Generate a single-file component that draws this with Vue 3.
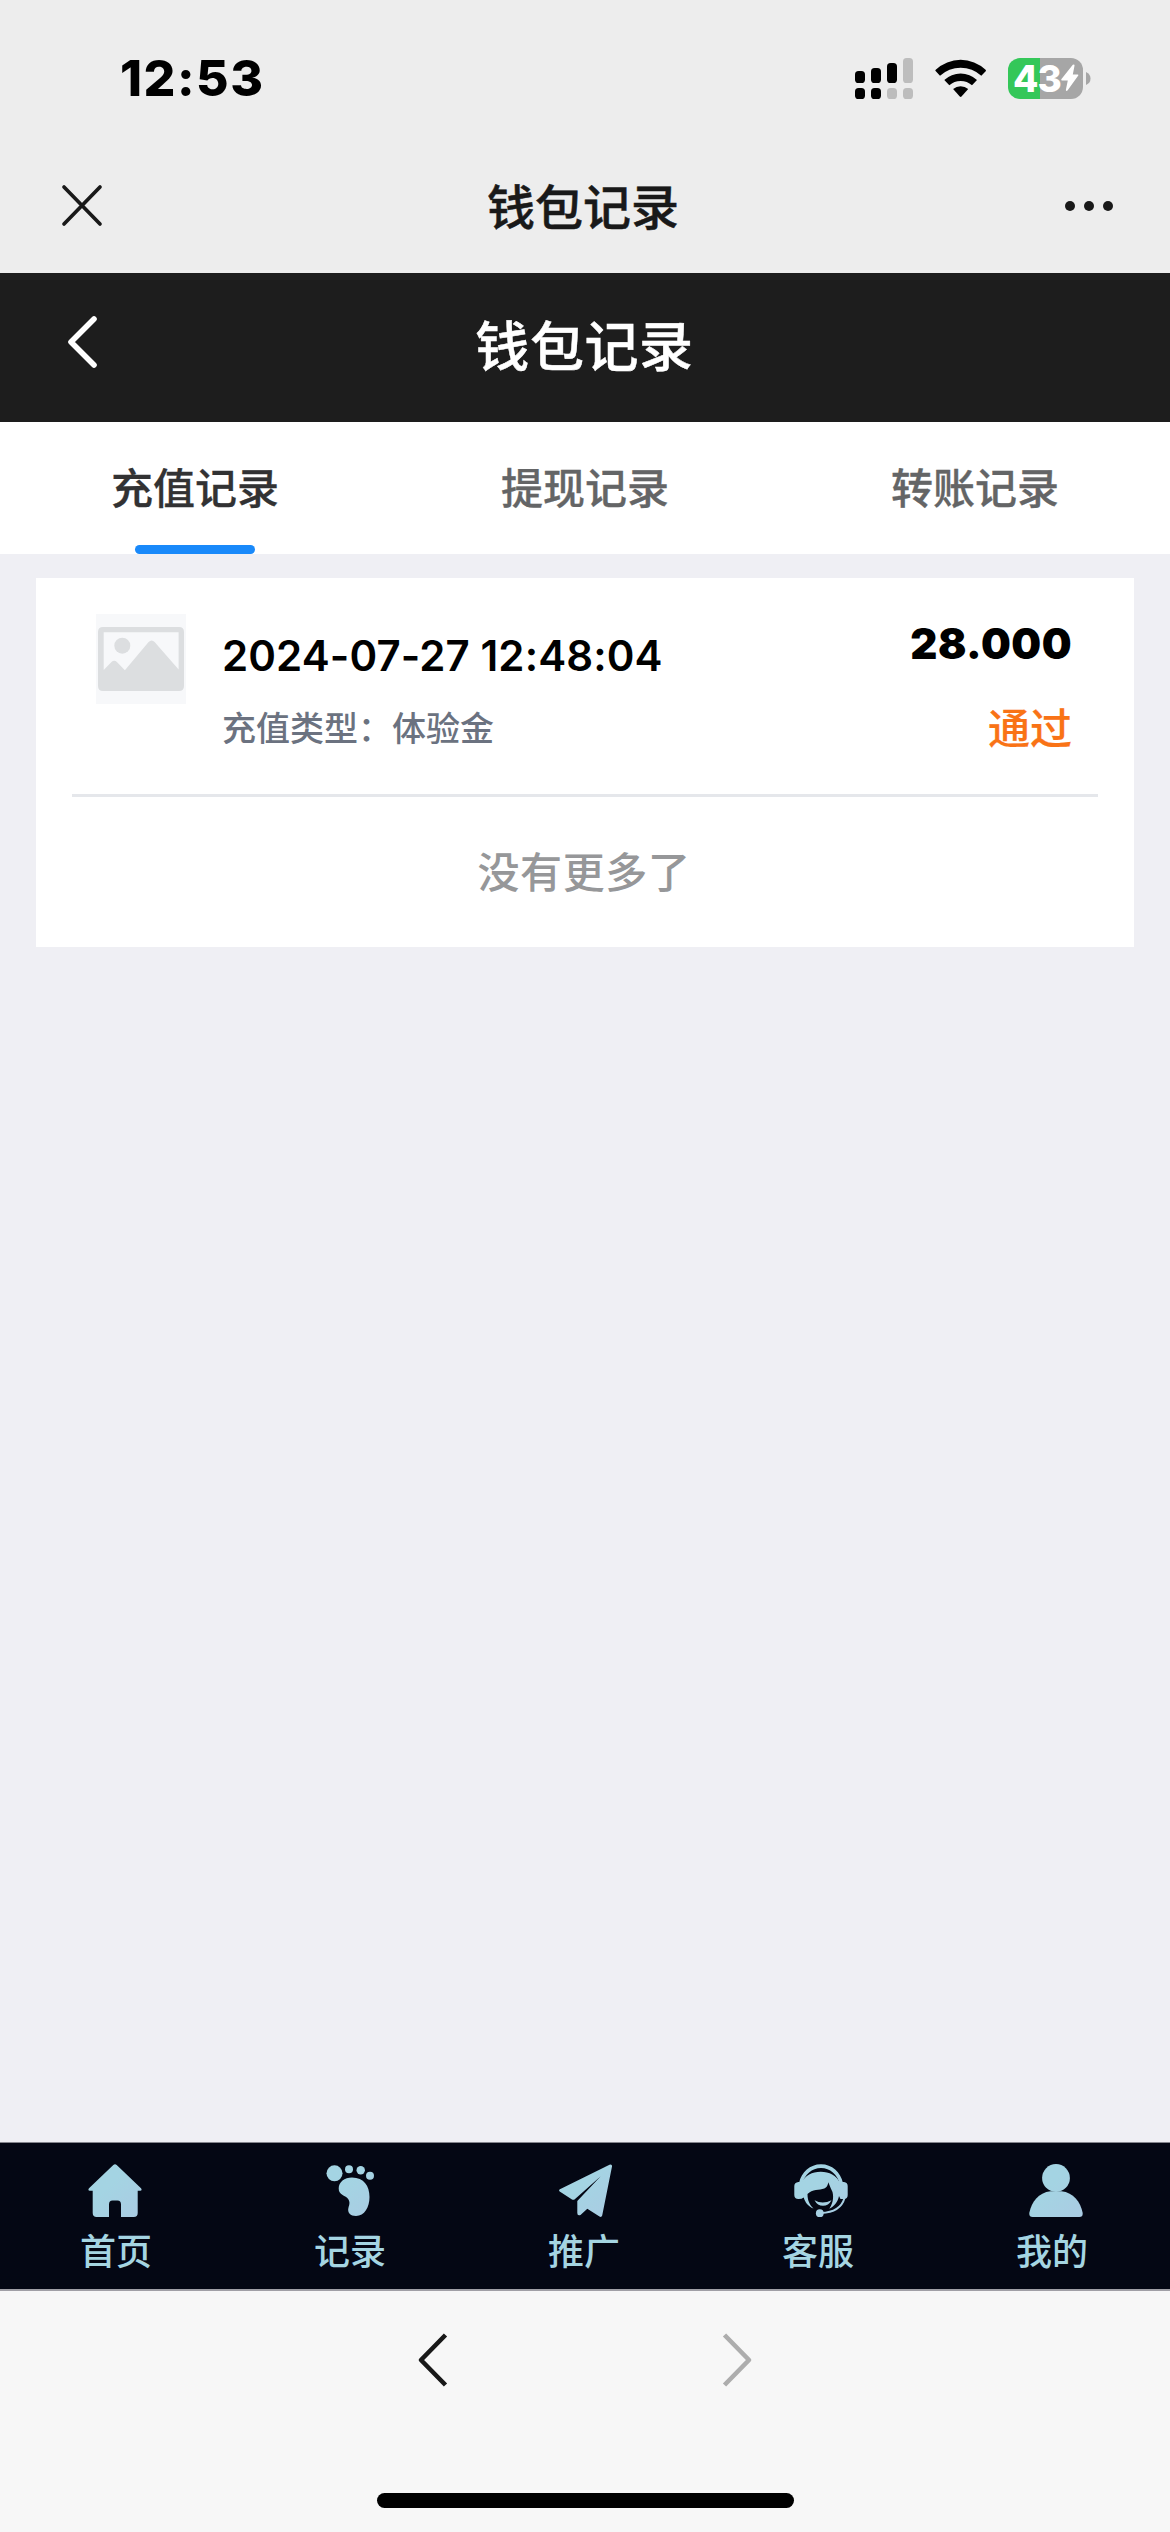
<script setup>
const tabs = ['充值记录', '提现记录', '转账记录']
const activeTab = 0

const records = [
  { time: '2024-07-27 12:48:04', type: '充值类型：体验金', amount: '28.000', status: '通过' },
]

const nav = [
  { id: 'home', label: '首页' },
  { id: 'log', label: '记录' },
  { id: 'promo', label: '推广' },
  { id: 'service', label: '客服' },
  { id: 'mine', label: '我的' },
]
</script>

<template>
  <div class="screen">
    <div class="status-bar">
      <span class="clock">12:53</span>
      <div class="status-icons">
        <svg class="signal" width="58" height="41" viewBox="0 0 58 41">
          <rect x="0" y="13" width="10" height="12" rx="3.6" />
          <rect x="16" y="10" width="10" height="15" rx="3.6" />
          <rect x="32" y="5" width="10" height="20" rx="3.6" />
          <rect x="48" y="0" width="10" height="25" rx="3.6" fill="#bdbdbd" />
          <rect x="0" y="30" width="10" height="11" rx="3.6" />
          <rect x="16" y="30" width="10" height="11" rx="3.6" />
          <rect x="32" y="30" width="10" height="11" rx="3.6" fill="#bdbdbd" />
          <rect x="48" y="30" width="10" height="11" rx="3.6" fill="#bdbdbd" />
        </svg>
        <svg class="wifi" width="52" height="41" viewBox="0 0 52 41">
          <path d="M0.6 13.100Q0 12.400 0.700 11.700a36.500 36.500 0 0 1 49.900 0q0.700 0.700 0.100 1.500l-4.400 4.600a30.200 30.200 0 0 0-41.300 0z" />
          <path d="M9.300 21.900a24 24 0 0 1 32.700 0l-5 5.400a17.300 17.300 0 0 0-22.700 0z" />
          <path d="M18.100 31.100a11.300 11.300 0 0 1 15.100 0l-6.700 7.400q-0.800 0.800-1.700 0z" />
        </svg>
        <div class="battery">
          <div class="battery-body">
            <span class="battery-text">43</span>
            <svg width="18" height="28" viewBox="0 0 18 28">
              <path d="M11.800 0.800q1.900-1 1.700 0.900L11.800 10.400h4.900q1.200 0.300 0.400 1.400L6.500 26.500q-1.700 1.200-1.600-0.800l1.900-9.300H1q-1.300-0.300-0.500-1.500z" fill="#fff" />
            </svg>
          </div>
          <svg width="5" height="13" viewBox="0 0 5 13"><path d="M0 0q4.500 2 4.500 6.500T0 13z" fill="#a6a6a6" /></svg>
        </div>
      </div>
    </div>

    <div class="app-bar">
      <svg width="42" height="44" viewBox="0 0 42 44" class="close">
        <path d="M3 3 39 40M39 3 3 40" stroke="#191919" stroke-width="3.700" stroke-linecap="round" />
      </svg>
      <span class="app-title">钱包记录</span>
      <svg width="50" height="12" viewBox="0 0 50 12" fill="#191919">
        <circle cx="6" cy="6" r="5" /><circle cx="25" cy="6" r="5" /><circle cx="44" cy="6" r="5" />
      </svg>
    </div>

    <header class="page-head">
      <svg class="back" width="32" height="54" viewBox="0 0 32 54">
        <path d="M28 4 5 27l23 23" fill="none" stroke="#fff" stroke-width="5.600" stroke-linecap="round" stroke-linejoin="round" />
      </svg>
      <h1>钱包记录</h1>
      <span></span>
    </header>

    <nav class="tabs">
      <div v-for="(tab, i) in tabs" :key="tab" class="tab" :class="{ active: i === activeTab }">
        <span>{{ tab }}</span>
      </div>
    </nav>

    <main class="content">
      <section class="card">
        <article v-for="r in records" :key="r.time" class="record">
          <svg class="thumb" width="90" height="90" viewBox="0 0 90 90">
            <rect width="90" height="90" fill="#f7f8fa" />
            <path fill="#dcdee0" fill-rule="evenodd" d="M7 13h76q5 0 5 5v54q0 5-5 5H7q-5 0-5-5V18q0-5 5-5zM7.700 18.300V56l7.800-8q2.700-2.500 5.400 0l8 8.300L52.600 28q3-3 6 0l24 27.500V18.300z" />
            <circle cx="26.300" cy="31.700" r="8" fill="#dcdee0" />
          </svg>
          <div class="details">
            <div class="time">{{ r.time }}</div>
            <div class="type">{{ r.type }}</div>
          </div>
          <div class="result">
            <div class="amount">{{ r.amount }}</div>
            <div class="state">{{ r.status }}</div>
          </div>
        </article>
        <p class="finished">没有更多了</p>
      </section>
    </main>

    <footer class="tabbar">
      <svg width="0" height="0" class="defs">
        <linearGradient id="ice" x1="0" y1="0" x2="54" y2="54" gradientUnits="userSpaceOnUse">
          <stop offset="0.400" stop-color="#a4d4e3" /><stop offset="1" stop-color="#aacbe3" />
        </linearGradient>
      </svg>
      <div v-for="item in nav" :key="item.id" class="nav-item">
        <svg width="54" height="54" viewBox="0 0 54 54" fill="url(#ice)">
          <path v-if="item.id === 'home'" d="M25.300 1q1.700-1.400 3.400 0L53 24.200q1.500 2.300-0.800 2.500H49.700V49q0 4-4 4H33V40.500q0-4-3.500-4h-5q-3.500 0-3.500 4V53H8.700q-4 0-4-4V26.700H1.800Q-0.500 26.500 1 24.200z" />
          <template v-else-if="item.id === 'log'">
            <circle cx="11.500" cy="9.300" r="8" />
            <circle cx="26" cy="5.300" r="4" />
            <circle cx="37.700" cy="6.300" r="4.200" />
            <circle cx="47" cy="11.700" r="4" />
            <path d="M15.700 24.500C15.700 18 21.500 13.500 29 13.500c12 0 17.500 8.500 17.500 19.500 0 10-5 19-13.500 19-5.500 0-9-3.500-7.500-8.500 1-3.200 2-6-1.200-9.500C21.500 31 15.700 31 15.700 24.500z" />
          </template>
          <path v-else-if="item.id === 'promo'" d="M50.500 0.700Q53.300-0.200 53 2.600L43.200 51.500Q42.500 53.700 40.500 52.600L28.300 44.800 21.500 51Q18.300 52.300 18.300 49V37L41.700 12.300 15.500 35.400Q14.500 36.200 13 35.600L0.700 27.600Q-0.600 26.300 0.900 25.300z" />
          <template v-else-if="item.id === 'service'">
            <path d="M5 19C7.500 8 16 0.300 27 0.300S46.500 8 49 19l-3.300 1C43.500 10.500 36 4 27 4S10.500 10.500 8.300 20z" />
            <path d="M4.500 18H8c3-6.500 10-10.300 18.700-10.300S42.500 11.500 45.500 18H50q3.700 0.500 3.700 4v9q0 4-4 4H46.500L45 32c-1 5.500-4.500 10-9.700 12.800 3.200-4.500 4.700-11 3.200-16.800q-1.800-3.500-4.200-9.700-0.500 4.700-4 6.200c-5 1.900-12 .4-16.800 5.500 0 6 1.800 10.500 6 14.500C14 42.500 11 38 9.700 33.500Q8 35 4.500 35 0.300 35 0.300 31v-9q0-3.500 4.200-4z" />
            <path d="M20.500 36.300q8 4.500 17 0-3 5.500-8.500 5.500t-8.500-5.500z" />
            <path d="M50.500 34C48 43 40 48.500 27 49" fill="none" stroke="url(#ice)" stroke-width="2" />
            <circle cx="25.800" cy="49.200" r="3.900" />
          </template>
          <template v-else>
            <circle cx="27" cy="14" r="13.900" />
            <path d="M21.500 27.200h11C44.500 28.500 51.500 38 53.600 48.500q0.700 4.500-3.300 4.500H3.700q-4 0-3.300-4.500C2.500 38 9.500 28.500 21.500 27.200z" />
          </template>
        </svg>
        <span>{{ item.label }}</span>
      </div>
    </footer>

    <div class="browser-bar">
      <div class="history">
        <svg width="32" height="54" viewBox="0 0 32 54"><path d="M28.500 2 4 27 28.500 52" fill="none" stroke="#191919" stroke-width="4.600" stroke-linejoin="round" /></svg>
        <svg width="32" height="54" viewBox="0 0 32 54"><path d="M3.500 2 28 27 3.500 52" fill="none" stroke="#adadad" stroke-width="4.600" stroke-linejoin="round" /></svg>
      </div>
      <div class="home-indicator"></div>
    </div>
  </div>
</template>

<style>
body {
  margin: 0;
}
</style>

<style scoped>
.screen {
  box-sizing: border-box;
  width: 1170px;
  height: 2532px;
  display: flex;
  flex-direction: column;
  overflow: hidden;
  background: #efeff4;
  font-family: "Noto Sans CJK SC", sans-serif;
  font-weight: 500;
}
svg {
  display: block;
  flex: none;
}
.status-bar {
  height: 156px;
  background: #ededed;
  display: flex;
  justify-content: space-between;
  align-items: center;
  padding: 0 79px 0 120px;
  box-sizing: border-box;
}
.clock {
  font: 800 50px/60px Inter, sans-serif;
  letter-spacing: 1.5px;
}
.status-icons {
  display: flex;
  align-items: center;
}
.wifi {
  margin: 0 21px 0 22px;
}
.battery {
  display: flex;
  align-items: center;
  gap: 3px;
}
.battery-body {
  box-sizing: border-box;
  width: 75px;
  height: 41px;
  padding-left: 5px;
  border-radius: 12px;
  background: linear-gradient(90deg, #34c759 32px, #a6a6a6 32px);
  display: flex;
  align-items: center;
}
.battery-text {
  width: 48px;
  font: 800 37px/41px Inter, sans-serif;
  letter-spacing: -1px;
  color: #fff;
}
.app-bar {
  height: 117px;
  box-sizing: border-box;
  padding: 0 56px 17px 61px;
  background: #ededed;
  display: grid;
  grid-template-columns: 50px 1fr 50px;
  align-items: center;
}
.app-title {
  padding: 0 9px 4px 0;
  text-align: center;
  font-size: 48px;
  line-height: 70px;
  color: #191919;
  -webkit-text-stroke: 0.5px #191919;
}
.page-head {
  height: 149px;
  box-sizing: border-box;
  padding: 0 66px;
  background: #1d1d1d;
  display: grid;
  grid-template-columns: 32px 1fr 32px;
  align-items: center;
}
.back {
  margin-bottom: 11px;
}
h1 {
  margin: 0 1px 8px 0;
  text-align: center;
  font-size: 54px;
  line-height: 80px;
  font-weight: 500;
  letter-spacing: 0.6px;
  color: #fff;
  -webkit-text-stroke: 0.5px #fff;
}
.tabs {
  height: 132px;
  background: #fff;
  display: grid;
  grid-template-columns: repeat(3, 1fr);
}
.tab {
  display: flex;
  flex-direction: column;
  align-items: center;
  justify-content: space-between;
  font-size: 42px;
  line-height: 128px;
  color: #646566;
  -webkit-text-stroke: 0.3px currentColor;
}
.tab span {
  height: 123px;
}
.tab.active {
  color: #323233;
}
.tab.active::after {
  content: "";
  width: 120px;
  height: 9px;
  border-radius: 4.5px;
  background: #1989fa;
}
.content {
  flex: 1;
  padding: 24px 36px;
}
.card {
  height: 369px;
  box-sizing: border-box;
  padding: 0 36px;
  background: #fff;
}
.record {
  height: 219px;
  box-sizing: border-box;
  padding: 36px 26px 0 24px;
  border-bottom: 3px solid #e5e7eb;
  display: flex;
  align-items: flex-start;
}
.details {
  flex: 1;
  padding: 10px 0 0 36px;
}
.time {
  font: 600 42px/64px Inter, sans-serif;
  letter-spacing: 0.1px;
}
.type {
  margin-top: 14px;
  font-size: 34px;
  line-height: 50px;
  color: #6b7280;
}
.result {
  text-align: right;
}
.amount {
  font: 900 42px/60px Inter, sans-serif;
  letter-spacing: 0.5px;
}
.state {
  margin-top: 22px;
  font-size: 42px;
  line-height: 60px;
  color: #f97316;
  -webkit-text-stroke: 0.2px currentColor;
}
.finished {
  margin: 0;
  padding-right: 2px;
  text-align: center;
  font-size: 42px;
  line-height: 146px;
  letter-spacing: 0.6px;
  color: #969799;
}
.tabbar {
  height: 149px;
  box-sizing: border-box;
  border-top: 1px solid #85858d;
  border-bottom: 2px solid #a09fa6;
  background: #040714;
  display: grid;
  grid-template-columns: repeat(5, 1fr);
}
.defs {
  position: absolute;
}
.nav-item {
  padding-top: 21px;
  display: flex;
  flex-direction: column;
  align-items: center;
  color: #a5d5e2;
  font-size: 36px;
  line-height: 50px;
}
.nav-item span {
  margin: 6px 2px 0 0;
}
.nav-item:nth-child(2) svg {
  margin-right: 4px;
}
.nav-item:nth-child(3) svg {
  margin-right: 2px;
}
.nav-item:nth-child(4) svg {
  margin-left: 2px;
}
.nav-item:nth-child(5) svg {
  margin-left: 4px;
}
.nav-item:nth-child(6) svg {
  margin-left: 6px;
}
.browser-bar {
  height: 241px;
  box-sizing: border-box;
  padding: 42px 0 24px;
  background: #f7f7f7;
  display: flex;
  flex-direction: column;
  align-items: center;
  justify-content: space-between;
}
.history {
  display: flex;
  gap: 272px;
}
.home-indicator {
  width: 417px;
  height: 15px;
  border-radius: 8px;
  background: #000;
}
</style>
